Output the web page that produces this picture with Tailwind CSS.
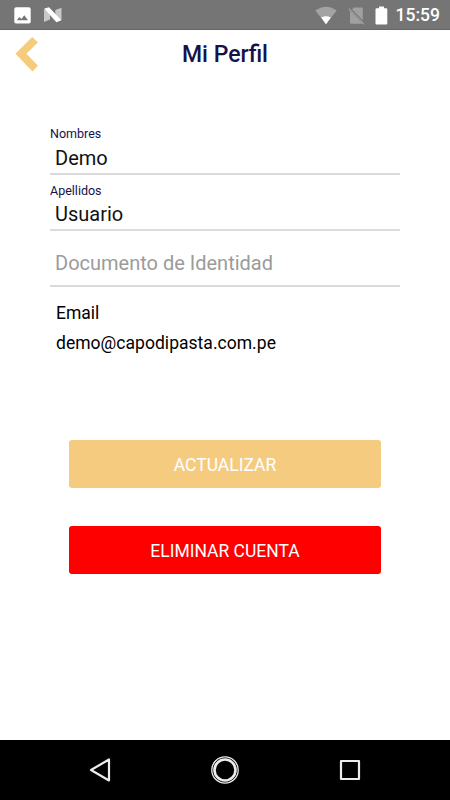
<!DOCTYPE html>
<html lang="es">
<head>
  <meta charset="UTF-8" />
  <meta name="viewport" content="width=device-width, initial-scale=1" />
  <title>Mi Perfil</title>
  <script src="https://cdn.jsdelivr.net/npm/@tailwindcss/browser@4"></script>
</head>
<body class="bg-white font-['Roboto',sans-serif]">
  <div class="w-[450px] h-[800px] flex flex-col overflow-hidden">
    <!-- Status bar -->
    <div class="h-[30px] shrink-0 bg-[#757575] border-b border-[#68666a] flex items-center justify-between pl-[14px] pr-[10px] pt-px text-white">
      <div class="flex items-center gap-[12px]">
        <svg class="w-[17px] h-[17px]" viewBox="0 0 17 17">
          <rect x="0.3" y="0.3" width="16.4" height="16.2" rx="1.8" fill="#fff" />
          <path d="M2.8 13.2L5.5 9.9L7.4 12L10.3 8.3L14 13.2Z" fill="#757575" />
        </svg>
        <svg class="w-[19px] h-[16px]" viewBox="0 0 19 16">
          <path d="M1 2L7 4.5V12.5L1 15ZM12.3 3L18.5 0.8V13L12.3 12Z" fill="#c8c8c8" />
          <path d="M1.3 1.5L6 0.3L18.4 13.2L13.4 15.2Z" fill="#fff" />
        </svg>
      </div>
      <div class="flex items-center">
        <svg class="w-[22px] h-[19px] mr-[11px]" viewBox="0 0 22 19">
          <path d="M0.3 4.6Q11 -3 21.7 4.6L11 18.2Z" fill="#a3a3a3" />
          <path d="M6.2 11.5Q11 9.2 15.8 11.5L11 18.2Z" fill="#fff" />
        </svg>
        <svg class="w-[17px] h-[19px] mr-[10px]" viewBox="0 0 17 19">
          <path d="M5.8 1.5H13.8Q14.8 1.5 14.8 2.5V15.8L3.5 4Z" fill="#a0a0a0" />
          <path d="M2 5L14.4 17.8H3.2Q2 17.8 2 16.6Z" fill="#a0a0a0" />
          <path d="M1.6 2L16.8 17.4" fill="none" stroke="#757575" stroke-width="1.4" />
          <path d="M0.8 2.8L16 18.2" fill="none" stroke="#a0a0a0" stroke-width="1.3" />
        </svg>
        <svg class="w-[13px] h-[19px] mr-[8px]" viewBox="0 0 13 19">
          <path d="M4 0.5H9V2.3H11.2Q12.3 2.3 12.3 3.4V17.4Q12.3 18.5 11.2 18.5H1.6Q0.5 18.5 0.5 17.4V3.4Q0.5 2.3 1.6 2.3H4Z" fill="#fff" />
        </svg>
        <span class="text-[17.5px] leading-none font-medium relative top-px">15:59</span>
      </div>
    </div>

    <!-- Header -->
    <header class="h-[50px] shrink-0 grid grid-cols-[60px_1fr_60px] items-center">
      <button class="pl-[15px]" aria-label="Volver">
        <svg class="w-[24px] h-[36px] block" viewBox="0 0 24 36">
          <path d="M0.7 16.7L17.2 0.3L22.7 5.3L11.2 16.7L22.7 28.8L17.5 34.2Z" fill="#f5cb7c" stroke="#f5cb7c" stroke-width="0.5" stroke-linejoin="round" />
        </svg>
      </button>
      <h1 class="text-center text-[23px] font-medium text-[#161147]">Mi Perfil</h1>
    </header>

    <!-- Form -->
    <main class="flex-1 pt-[46px]">
      <div class="mx-[50px] flex flex-col">
        <label class="h-[49px] border-b-2 border-[#d9d9d9] block">
          <span class="block h-[16px] text-[12.5px] leading-[16px] text-[#161147]">Nombres</span>
          <span class="block pl-[5px] text-[20px] leading-[33px] text-[#111]">Demo</span>
        </label>
        <label class="h-[49px] mt-[7px] border-b-2 border-[#dcdcdc] block">
          <span class="block h-[17px] text-[12.5px] leading-[17px] text-[#161147]">Apellidos</span>
          <span class="block pl-[5px] text-[20px] leading-[31px] text-[#111]">Usuario</span>
        </label>
        <div class="h-[56px] border-b-2 border-[#d9d9d9] pl-[5px] pt-[17px] text-[20px] leading-[31px] text-[#9b9b9b]">Documento de Identidad</div>
        <div class="pt-[11px] pl-[6px] text-[17.5px] leading-[30px] text-black">
          <p>Email</p>
          <p class="tracking-[0.03px]">demo@capodipasta.com.pe</p>
        </div>
      </div>
      <div class="mx-[69px] mt-[82px] flex flex-col gap-[38px] text-[17.5px] text-white">
        <button class="h-[48px] pt-[2px] rounded-[3px] bg-[#f5cc7f]">ACTUALIZAR</button>
        <button class="h-[48px] pt-[2px] rounded-[3px] bg-[#ff0000]">ELIMINAR CUENTA</button>
      </div>
    </main>

    <!-- Navigation bar -->
    <nav class="h-[60px] shrink-0 bg-black flex items-center justify-between px-[85px]">
      <svg class="w-[30px] h-[30px]" viewBox="0 0 30 30" fill="none" stroke="#ececec" stroke-width="2.2" stroke-linejoin="round">
        <path d="M24 4.5V25.5L6 15Z" />
      </svg>
      <svg class="w-[30px] h-[30px]" viewBox="0 0 30 30" fill="none" stroke="#ececec">
        <circle cx="15" cy="15" r="13.2" stroke-width="1.3" />
        <circle cx="15" cy="15" r="10.5" stroke-width="2.6" />
      </svg>
      <svg class="w-[30px] h-[30px]" viewBox="0 0 30 30" fill="none" stroke="#ececec" stroke-width="2.2" stroke-linejoin="round">
        <rect x="6" y="6" width="18" height="18" />
      </svg>
    </nav>
  </div>
</body>
</html>
